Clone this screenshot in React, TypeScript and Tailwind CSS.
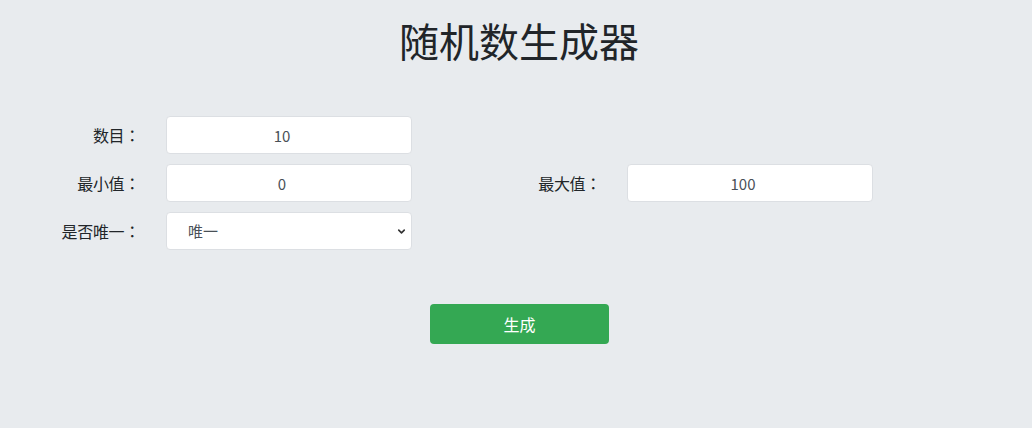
import React from 'react';
import { ChevronDown } from 'lucide-react';

const fontStack = "font-['Microsoft_YaHei','Noto_Sans_CJK_SC',sans-serif]";

const Field = ({ value }: { value: string }) => (
  <input
    readOnly
    value={value}
    className="h-[38px] w-[246px] rounded-[4px] border border-[#dcdfe3] bg-white pr-[14px] text-center text-[15px] text-[#495057] outline-none"
  />
);

const Label = ({ text }: { text: string }) => (
  <label className="pr-[26px] text-right text-[16px] tracking-[-0.3px] text-[#212529]">
    {text}
    <span className="font-['Noto_Sans_CJK_TC',sans-serif]">：</span>
  </label>
);

export default function App() {
  return (
    <div className={`min-h-[428px] w-full bg-[#e8ebee] ${fontStack}`}>
      <h1 className="pt-[14px] text-center text-[40px] leading-[52px] text-[#212529]">
        <span className="pl-[6px]">随机数生成器</span>
      </h1>
      <div className="mt-[50px] grid grid-cols-[166px_246px_215px_246px] items-center gap-y-[10px]">
        <Label text="数目" />
        <Field value="10" />
        <div />
        <div />

        <Label text="最小值" />
        <Field value="0" />
        <Label text="最大值" />
        <Field value="100" />

        <Label text="是否唯一" />
        <div className="relative h-[38px] w-[246px]">
          <select
            defaultValue="true"
            className="h-full w-full appearance-none rounded-[4px] border border-[#dcdfe3] bg-white pl-[21px] text-[15px] text-[#495057] outline-none"
          >
            <option value="true">唯一</option>
            <option value="false">不唯一</option>
          </select>
          <ChevronDown
            strokeWidth={3.5}
            className="pointer-events-none absolute right-[5px] top-[14px] size-[11px] text-[#333]"
          />
        </div>
        <div />
        <div />
      </div>
      <div className="mt-[54px] flex justify-center pl-[7px]">
        <button className="h-[40px] w-[179px] rounded-[4px] bg-[#34a853] text-[16px] text-white">
          生成
        </button>
      </div>
    </div>
  );
}
